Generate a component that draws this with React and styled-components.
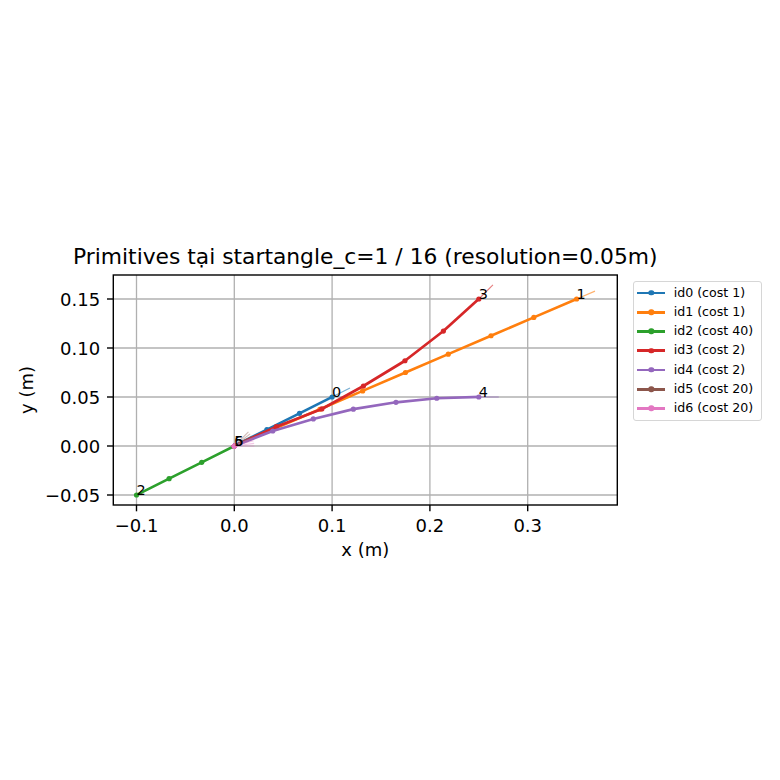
import React from "react";
import styled, { createGlobalStyle } from "styled-components";

const GlobalStyle = createGlobalStyle`
  html, body { margin: 0; padding: 0; background: #ffffff; }
  body { font-family: "DejaVu Sans", "Liberation Sans", sans-serif; }
`;

const Figure = styled.div`
  width: 780px;
  height: 780px;
  display: flex;
  align-items: flex-start;
  background: #ffffff;
  overflow: hidden;
`;

const Chart = styled.svg`
  flex: none;
  display: block;
  overflow: visible;
  font-family: "DejaVu Sans", "Liberation Sans", sans-serif;
`;

const Legend = styled.div`
  flex: none;
  margin-top: ${(p) => p.$top}px;
  width: 124px;
  padding: 1.6px 0 2.3px 3px;
  box-sizing: content-box;
  border: 1px solid #d6d6d6;
  border-radius: 3px;
  background: rgba(255, 255, 255, 0.8);
  display: flex;
  flex-direction: column;
`;

const LegendRow = styled.div`
  display: flex;
  align-items: center;
  height: 19.25px;
  gap: 8.4px;
`;

const Handle = styled.span`
  position: relative;
  flex: none;
  width: 28.3px;
  height: 2.7px;
  background: ${(p) => p.$color};
  &::after {
    content: "";
    position: absolute;
    left: 50%;
    top: 50%;
    width: 5.4px;
    height: 5.4px;
    border-radius: 50%;
    background: ${(p) => p.$color};
    transform: translate(-50%, -50%);
  }
`;

const LegendLabel = styled.span`
  font-size: 12.6px;
  color: #000;
  white-space: nowrap;
  line-height: 1;
`;

const X0 = 234.3;
const Y0 = 446;
const SX = 978;
const SY = 980;
const px = (v) => X0 + v * SX;
const py = (v) => Y0 - v * SY;

const AX = { left: 113.3, right: 617.3, top: 275, bottom: 505 };

const xticks = [
  [-0.1, "\u22120.1"],
  [0, "0.0"],
  [0.1, "0.1"],
  [0.2, "0.2"],
  [0.3, "0.3"],
];
const yticks = [
  [-0.05, "\u22120.05"],
  [0, "0.00"],
  [0.05, "0.05"],
  [0.1, "0.10"],
  [0.15, "0.15"],
];

const deg = (d) => (d * Math.PI) / 180;
const headA = Math.atan2(0.5, 1);

const series = [
  {
    name: "id0 (cost 1)",
    color: "#1f77b4",
    pts: [[0, 0], [0.03333, 0.016667], [0.06667, 0.03333], [0.1, 0.05]],
    arrows: [headA],
    label: "0",
  },
  {
    name: "id1 (cost 1)",
    color: "#ff7f0e",
    pts: Array.from({ length: 9 }, (_, i) => [i * 0.04375, i * 0.01875]),
    arrows: [Math.atan2(0.15, 0.35)],
    label: "1",
  },
  {
    name: "id2 (cost 40)",
    color: "#2ca02c",
    pts: [[0, 0], [-0.03333, -0.016667], [-0.06667, -0.03333], [-0.1, -0.05]],
    arrows: [headA],
    label: "2",
  },
  {
    name: "id3 (cost 2)",
    color: "#d62728",
    pts: [
      [0, 0],
      [0.043, 0.0197],
      [0.0895, 0.0378],
      [0.132, 0.0612],
      [0.1745, 0.087],
      [0.2138, 0.1173],
      [0.25, 0.15],
    ],
    arrows: [deg(45)],
    label: "3",
  },
  {
    name: "id4 (cost 2)",
    color: "#9467bd",
    pts: [
      [0, 0],
      [0.0393, 0.0153],
      [0.0808, 0.0276],
      [0.1217, 0.0376],
      [0.1653, 0.0446],
      [0.207, 0.0487],
      [0.25, 0.05],
    ],
    arrows: [0],
    label: "4",
  },
  {
    name: "id5 (cost 20)",
    color: "#8c564b",
    pts: [[0, 0], [0, 0], [0, 0], [0, 0]],
    arrows: [deg(22.5), deg(30), deg(37.5), deg(45)],
    label: "5",
  },
  {
    name: "id6 (cost 20)",
    color: "#e377c2",
    pts: [[0, 0], [0, 0], [0, 0], [0, 0]],
    arrows: [deg(22.5), deg(15), deg(7.5), deg(0)],
    label: "6",
  },
];

const ARROW_LEN = 20;

function Series({ s }) {
  const pts = s.pts.map(([x, y]) => `${px(x)},${py(y)}`).join(" ");
  const last = s.pts[s.pts.length - 1];
  const ex = px(last[0]);
  const ey = py(last[1]);
  return (
    <g>
      <polyline
        points={pts}
        fill="none"
        stroke={s.color}
        strokeWidth="2.7"
        strokeLinejoin="round"
        strokeLinecap="square"
      />
      {s.pts.map(([x, y], i) => (
        <circle key={i} cx={px(x)} cy={py(y)} r="2.6" fill={s.color} />
      ))}
      {s.arrows.map((a, i) => (
        <line
          key={"a" + i}
          x1={ex}
          y1={ey}
          x2={ex + ARROW_LEN * Math.cos(a)}
          y2={ey - ARROW_LEN * Math.sin(a)}
          stroke={s.color}
          strokeWidth="1.1"
          opacity={s.arrows.length > 1 ? 0.4 : 0.6}
        />
      ))}
    </g>
  );
}

export default function App() {
  const axW = AX.right - AX.left;
  const axH = AX.bottom - AX.top;
  return (
    <>
      <GlobalStyle />
      <Figure>
        <Chart width="633" height="780" viewBox="0 0 633 780">
          <defs>
            <clipPath id="axclip">
              <rect x={AX.left} y={AX.top} width={axW} height={axH} />
            </clipPath>
          </defs>
          <rect x={AX.left} y={AX.top} width={axW} height={axH} fill="#fff" />
          <g stroke="#b0b0b0" strokeWidth="1.3">
            {xticks.map(([v]) => (
              <line key={"gx" + v} x1={px(v)} x2={px(v)} y1={AX.top} y2={AX.bottom} />
            ))}
            {yticks.map(([v]) => (
              <line key={"gy" + v} x1={AX.left} x2={AX.right} y1={py(v)} y2={py(v)} />
            ))}
          </g>
          <g clipPath="url(#axclip)">
            {series.map((s) => (
              <Series key={s.name} s={s} />
            ))}
          </g>
          <g fontSize="14.4" fill="#000">
            {series.map((s) => {
              const last = s.pts[s.pts.length - 1];
              return (
                <text key={"l" + s.label} x={px(last[0])} y={py(last[1])}>
                  {s.label}
                </text>
              );
            })}
          </g>
          <rect
            x={AX.left}
            y={AX.top}
            width={axW}
            height={axH}
            fill="none"
            stroke="#000"
            strokeWidth="1.4"
          />
          <g stroke="#000" strokeWidth="1.4">
            {xticks.map(([v]) => (
              <line key={"tx" + v} x1={px(v)} x2={px(v)} y1={AX.bottom} y2={AX.bottom + 6.3} />
            ))}
            {yticks.map(([v]) => (
              <line key={"ty" + v} x1={AX.left - 6.3} x2={AX.left} y1={py(v)} y2={py(v)} />
            ))}
          </g>
          <g fontSize="18" fill="#000">
            {xticks.map(([v, t]) => (
              <text key={"xl" + v} x={px(v)} y={532} textAnchor="middle">
                {t}
              </text>
            ))}
            {yticks.map(([v, t]) => (
              <text key={"yl" + v} x={100.2} y={py(v) + 6.6} textAnchor="end">
                {t}
              </text>
            ))}
          </g>
          <text x={(AX.left + AX.right) / 2} y={556} fontSize="18" textAnchor="middle">
            x (m)
          </text>
          <text
            transform={`translate(33.3, ${(AX.top + AX.bottom) / 2}) rotate(-90)`}
            fontSize="18"
            textAnchor="middle"
          >
            y (m)
          </text>
          <text
            x={(AX.left + AX.right) / 2}
            y={264}
            fontSize="21.8"
            textAnchor="middle"
          >
            Primitives tại startangle_c=1 / 16 (resolution=0.05m)
          </text>
        </Chart>
        <Legend $top={280.7}>
          {series.map((s) => (
            <LegendRow key={s.name}>
              <Handle $color={s.color} />
              <LegendLabel>{s.name}</LegendLabel>
            </LegendRow>
          ))}
        </Legend>
      </Figure>
    </>
  );
}
